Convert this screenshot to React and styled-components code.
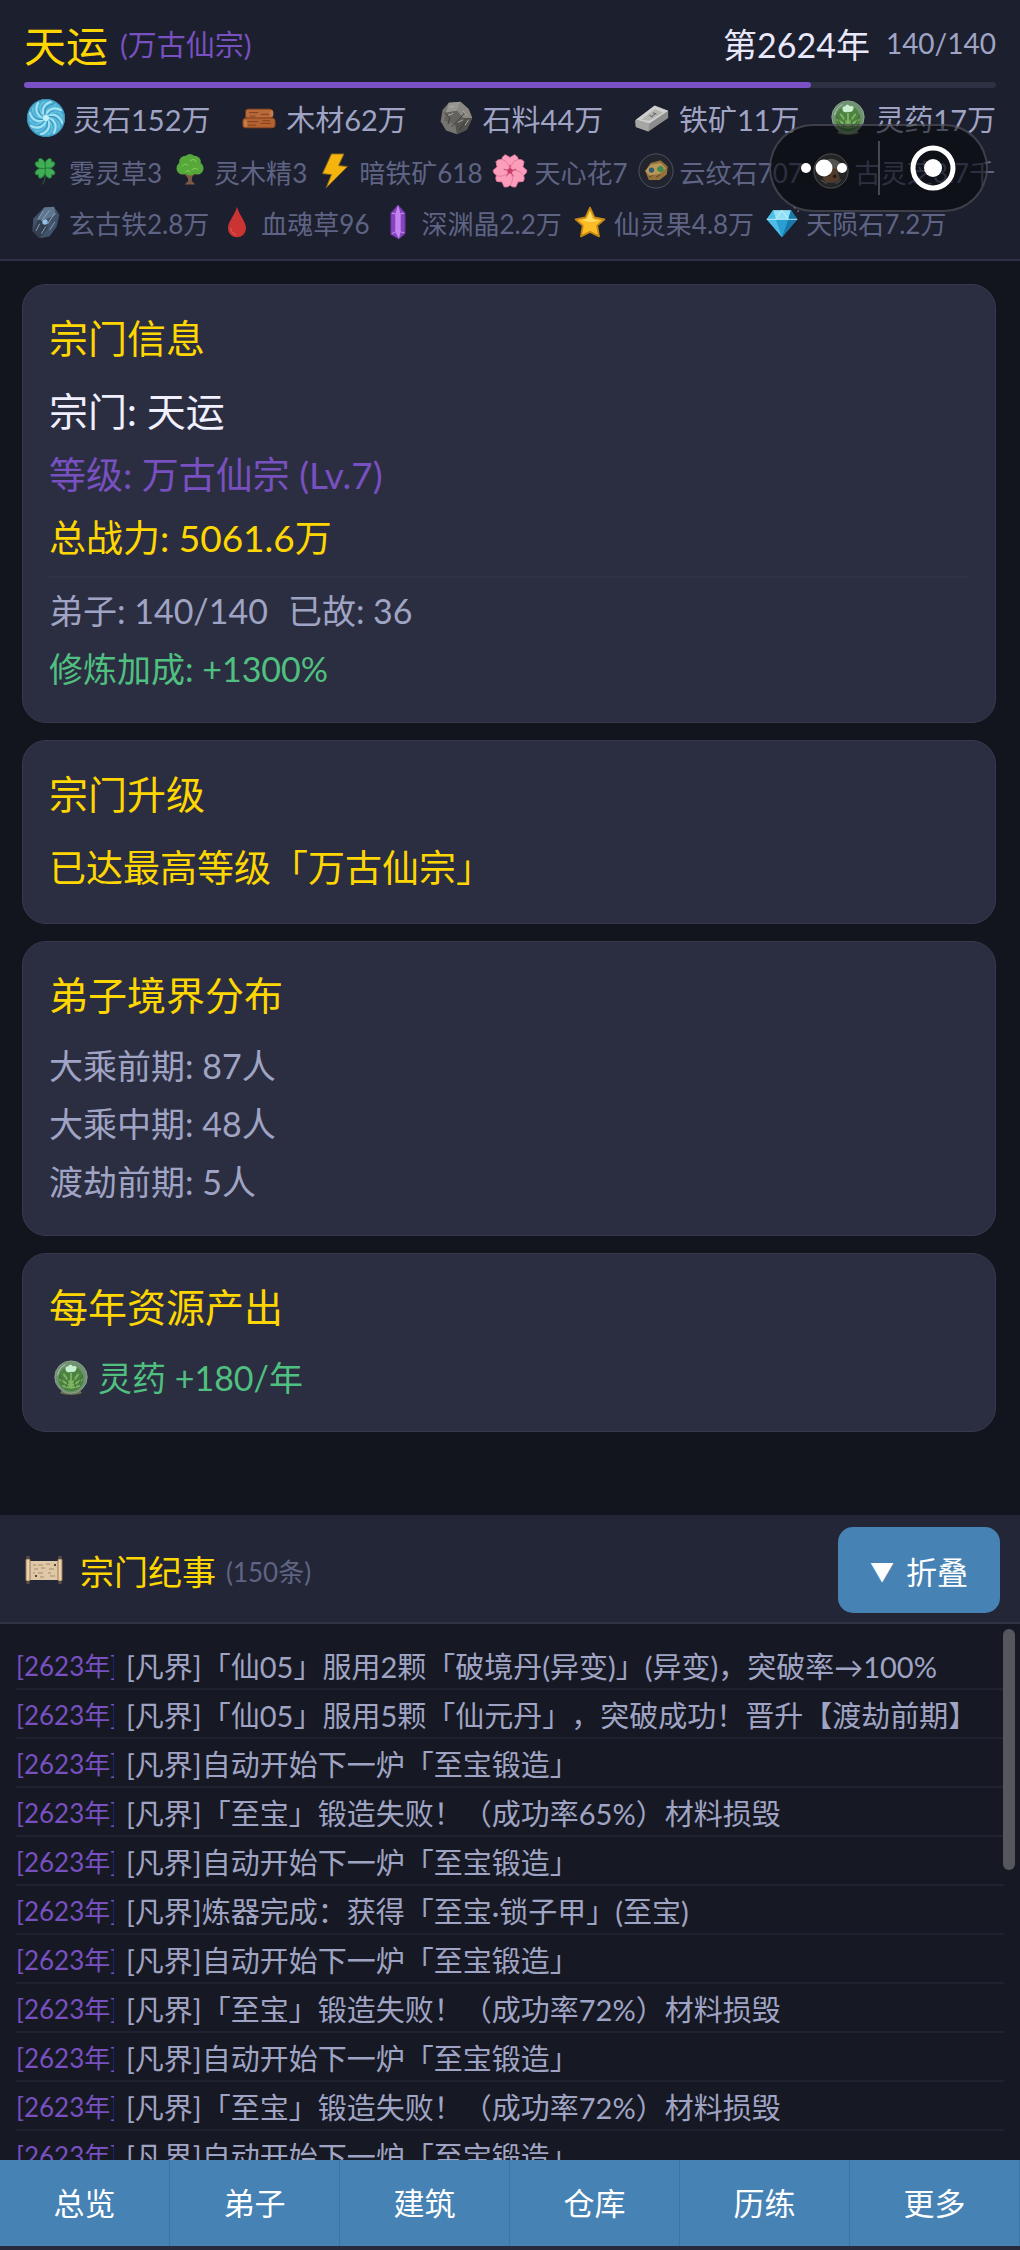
import React, { useState } from "react";
import styled, { createGlobalStyle } from "styled-components";

const resources = [
  { icon: "spirit", name: "灵石", amount: "152万" },
  { icon: "wood", name: "木材", amount: "62万" },
  { icon: "rock", name: "石料", amount: "44万" },
  { icon: "ingot", name: "铁矿", amount: "11万" },
  { icon: "herb", name: "灵药", amount: "17万" },
];

const materials = [
  [
    { icon: "clover", name: "雾灵草", amount: "3" },
    { icon: "tree", name: "灵木精", amount: "3" },
    { icon: "bolt", name: "暗铁矿", amount: "618" },
    { icon: "flower", name: "天心花", amount: "7" },
    { icon: "cloudStone", name: "云纹石", amount: "707" },
    { icon: "fungus", name: "古灵芝", amount: "3.7千" },
  ],
  [
    { icon: "darkIron", name: "玄古铁", amount: "2.8万" },
    { icon: "blood", name: "血魂草", amount: "96" },
    { icon: "crystal", name: "深渊晶", amount: "2.2万" },
    { icon: "star", name: "仙灵果", amount: "4.8万" },
    { icon: "diamond", name: "天陨石", amount: "7.2万" },
  ],
];

const realms = [
  { name: "大乘前期", count: 87 },
  { name: "大乘中期", count: 48 },
  { name: "渡劫前期", count: 5 },
];

const forgeNext = "[凡界]自动开始下一炉「至宝锻造」";
const logs = [
  "[凡界]「仙05」服用2颗「破境丹(异变)」(异变)，突破率→100%",
  "[凡界]「仙05」服用5颗「仙元丹」，突破成功！晋升【渡劫前期】",
  forgeNext,
  "[凡界]「至宝」锻造失败！（成功率65%）材料损毁",
  forgeNext,
  "[凡界]炼器完成：获得「至宝·锁子甲」(至宝)",
  forgeNext,
  "[凡界]「至宝」锻造失败！（成功率72%）材料损毁",
  forgeNext,
  "[凡界]「至宝」锻造失败！（成功率72%）材料损毁",
  forgeNext,
];

const tabs = ["总览", "弟子", "建筑", "仓库", "历练", "更多"];

const swirlArms = [0, 45, 90, 135, 180, 225, 270, 315];

const drawings = {
  spirit: (
    <>
      <circle cx="20" cy="20" r="19" fill="#4fb0d6" />
      <g fill="none" strokeLinecap="round">
        {swirlArms.map((deg) => (
          <g key={deg} transform={`rotate(${deg} 20 20)`}>
            <path d="M20 20C20 12 27 8 35 12" stroke="#a6e4f2" strokeWidth="2" />
            <path d="M20 20C22 13 29 11 36 16" stroke="#2f8fbd" strokeWidth="1" />
            <path d="M20 18C19 10 24 5 30 7" stroke="#74cde8" strokeWidth="1" />
          </g>
        ))}
      </g>
      <circle cx="20" cy="20" r="3" fill="#c4f0fa" />
      <circle cx="20" cy="20" r="18.5" fill="none" stroke="#3c93b8" />
    </>
  ),
  wood: (
    <>
      <rect x="5" y="10" width="30" height="11" rx="3" fill="#b9693a" stroke="#6f3a1e" />
      <rect x="2" y="20" width="36" height="11" rx="3" fill="#b4622f" stroke="#6f3a1e" />
      <path d="M9 14h10M22 16h9M10 18h6M7 24h12M22 26h11M8 28h9M24 23h8" stroke="#7a4020" strokeWidth="1" />
      <ellipse cx="5" cy="26" rx="2" ry="4" fill="#c47c49" />
      <ellipse cx="34" cy="15" rx="2" ry="4" fill="#c47c49" />
    </>
  ),
  rock: (
    <>
      <path d="M12 3L25 2L34 10L38 20L32 33L21 38L9 34L3 24L5 11Z" fill="#77756f" />
      <path d="M12 3L25 2L21 12L9 14Z" fill="#989690" />
      <path d="M25 2L34 10L38 20L28 20L21 12Z" fill="#8b8881" />
      <path d="M9 14L21 12L28 20L19 27L7 23Z" fill="#64625e" />
      <path d="M28 20L38 20L32 33L21 38L19 27Z" fill="#53514e" />
      <path d="M7 14L13 20L11 27M15 30L22 23L30 14M24 33L30 25" stroke="#3b3a38" fill="none" />
      <path d="M13 8l5-1M28 12l4 5M22 25l6-3M11 17l6-2M30 28l4-6" stroke="#b5b2aa" fill="none" />
    </>
  ),
  ingot: (
    <>
      <path d="M1 23L22 7L38 12L38 20L16 35L2 30Z" fill="#8d8d8d" />
      <path d="M2 22L23 6L38 12L17 26Z" fill="#cfcfcd" />
      <path d="M8 22L23 10L32 14L17 23Z" fill="#b4b4b1" />
      <path d="M2 22L17 26L16 35L2 30Z" fill="#a5a5a4" />
      <path d="M17 17l4 2M21 14l4 2M20 18l4-3" stroke="#5b5b5b" strokeWidth="1" />
    </>
  ),
  herb: (
    <>
      <path d="M11 31h18l3 6q-12 4-24 0z" fill="#6d7350" />
      <circle cx="20" cy="19" r="18" fill="#6f9371" stroke="#8fa493" />
      <circle cx="20" cy="21" r="14" fill="#4d8342" />
      <g fill="none" stroke="#7fb465" strokeWidth="2" strokeLinecap="round">
        <path d="M20 31V15M20 27L12 16M20 27L28 16M20 29L8 22M20 29L32 22M20 31L11 29M20 31L29 29" />
      </g>
      <path d="M15 30L17 20M25 30L23 20M11 26L7 17M29 26L33 17" stroke="#356a2f" />
      <path d="M14 11q-1-4 3-4q2-4 5 0q5-1 4 3q-1 4-6 3q-5 2-6-2z" fill="#c9efd2" />
      <path d="M5 17q2-9 9-12" fill="none" stroke="#b6c9b8" />
    </>
  ),
  clover: (
    <>
      <path d="M20 20q1 10-3 15" fill="none" stroke="#2f6b34" strokeWidth="1" />
      {[0, 90, 180, 270].map((deg) => (
        <path key={deg} transform={`rotate(${deg + 45} 20 17)`} d="M20 17C13 13 14 4 18 5Q20 6 20 7Q20 6 22 5C26 4 27 13 20 17Z" fill="#3fae55" stroke="#24783a" />
      ))}
    </>
  ),
  tree: (
    <>
      <path d="M17 20L18 31L14 35H26L22 31L23 20Z" fill="#7b5946" />
      <path d="M20 29L14 22M20 27L27 21" stroke="#7b5946" strokeWidth="2" />
      <g fill="#57a83a">
        <circle cx="12" cy="17" r="7" />
        <circle cx="28" cy="17" r="7" />
        <circle cx="20" cy="19" r="6" />
        <circle cx="15" cy="10" r="7" />
        <circle cx="25" cy="10" r="7" />
        <circle cx="20" cy="7" r="6" />
      </g>
      <path d="M11 15q4-5 7-1M20 9q5-4 7 1M22 19q4-4 7 0M15 21q3-3 5 0" fill="none" stroke="#8bd25a" />
    </>
  ),
  bolt: <path d="M16 1L30 1L24 14L34 15L10 39L16 24L6 23Z" fill="#f6b40e" stroke="#7e6120" />,
  flower: (
    <>
      {[0, 72, 144, 216, 288].map((deg) => (
        <path key={deg} transform={`rotate(${deg} 20 20)`} d="M20 20C8 15 9 4 15 2L20 5L25 2C31 4 32 15 20 20Z" fill="#fb9dbb" stroke="#e3799d" />
      ))}
      <circle cx="20" cy="20" r="3" fill="#d2436f" />
      <path d="M20 20v-7M20 20l7-2M20 20l4 6M20 20l-4 6M20 20l-7-2" stroke="#c23b64" strokeWidth="1" />
    </>
  ),
  cloudStone: (
    <>
      <circle cx="20" cy="20" r="19" fill="#22252d" stroke="#555966" />
      <path d="M8 20L14 11L25 8L33 15L32 24L24 30L12 30Z" fill="#94713d" />
      <path d="M8 20L14 13L25 11L31 17L24 23L13 25Z" fill="#b9985a" />
      <circle cx="15" cy="19" r="3" fill="#335a70" />
      <path d="M21 17q4-5 7-1q2 5-3 5q-4 0-4-4z" fill="#3f8c4b" />
      <path d="M12 27l4-2M20 27l5-3" stroke="#5a421f" />
    </>
  ),
  fungus: (
    <>
      <circle cx="20" cy="20" r="19" fill="#4a4a4b" stroke="#b5b5b5" />
      <path d="M7 14q13-15 26 0l-5 4H12z" fill="#b4b2ad" />
      <path d="M11 29L14 18L20 15L27 18L30 29L24 33H15Z" fill="#b07c55" />
      <circle cx="17" cy="24" r="2" fill="#533420" />
      <circle cx="24" cy="26" r="2" fill="#533420" />
      <path d="M9 30l6 4M31 30l-6 4" stroke="#d0d0d0" />
    </>
  ),
  darkIron: (
    <>
      <path d="M19 4L30 3L36 12L33 25L25 36L14 38L6 30L7 16Z" fill="#40536a" />
      <path d="M19 4L30 3L32 12L21 17L12 18Z" fill="#60768e" />
      <path d="M12 18L21 17L23 27L14 38L6 30Z" fill="#333f50" />
      <path d="M18 8l-6 9M25 7l-9 12M31 10l-8 12M31 20l-6 9M14 22l-4 8M21 25l-5 8" stroke="#93a9be" />
      <circle cx="20" cy="20" r="3" fill="#93c0ea" />
    </>
  ),
  blood: (
    <>
      <path d="M20 3C23 14 30 19 30 27A10 10 0 0 1 10 27C10 19 17 14 20 3Z" fill="#cc3333" />
      <path d="M13 27q1 6 6 7" fill="none" stroke="#e06464" />
    </>
  ),
  crystal: (
    <>
      <path d="M20 1L28 10V33L21 39L12 34V10Z" fill="#8743c0" stroke="#52307f" />
      <path d="M20 1L23 11V31L21 39L17 31V11Z" fill="#c285f2" />
      <path d="M13 10L17 11M23 11L27 10M17 31L13 33M23 31L27 32" fill="none" stroke="#d3a0f5" />
    </>
  ),
  star: (
    <>
      <path d="M20 4L25 15L36 17L28 24L30 36L20 31L10 36L12 24L4 17L15 15Z" fill="#fbbd26" stroke="#c48617" strokeWidth="2" strokeLinejoin="round" />
      <path d="M20 8L23 17L31 19L20 20L11 18L17 16Z" fill="#ffdc64" />
    </>
  ),
  diamond: (
    <>
      <path d="M10 7H30L37 17L20 37L3 17Z" fill="#2b9fd2" />
      <path d="M10 7H30L27 17H13Z" fill="#93e0f5" />
      <path d="M3 17L10 7L13 17L20 37Z" fill="#4cbde6" />
      <path d="M30 7L37 17L20 37L27 17Z" fill="#187aaa" />
      <path d="M3 17H37M13 17L20 7L27 17" fill="none" stroke="#c9f4ff" />
      <circle cx="34" cy="4" r="1" fill="#c49a8b" />
      <circle cx="38" cy="8" r="1" fill="#7c6a85" />
    </>
  ),
  scroll: (
    <>
      <rect x="4" y="11" width="32" height="19" fill="#dfc8a5" />
      <path d="M9 15h3M14 15h5M22 14h4M10 19h4M17 18h4M25 19h5M9 23h2M14 23h5M24 23h3M16 27h4M26 26h5" stroke="#a3886a" />
      <path d="M30 14h2v2h-2zM11 25h2v2h-2z" fill="#5d4330" />
      <rect x="2" y="9" width="4" height="22" rx="1" fill="#ead2ac" stroke="#9b7b58" />
      <rect x="34" y="9" width="4" height="22" rx="1" fill="#ead2ac" stroke="#9b7b58" />
      <path d="M4 9V6M4 31v3M36 9V6M36 31v3" stroke="#5d4d43" strokeWidth="3" />
    </>
  ),
};

const Icon = ({ name, size }) => (
  <Drawing viewBox="0 0 40 40" $size={size} aria-hidden="true">
    {drawings[name]}
  </Drawing>
);

const App = () => {
  const [open, setOpen] = useState(true);

  return (
    <Page>
      <GlobalStyle />
      <Header>
        <TitleRow>
          <SectName>天运</SectName>
          <SectRank>(万古仙宗)</SectRank>
          <Year>第2624年</Year>
          <Population>140/140</Population>
        </TitleRow>
        <Progress>
          <ProgressFill style={{ width: "81%" }} />
        </Progress>
        <ResourceRow>
          {resources.map((item) => (
            <Resource key={item.name}>
              <IconBox>
                <Icon name={item.icon} size={item.icon === "spirit" ? 40 : 36} />
              </IconBox>
              {item.name}
              {item.amount}
            </Resource>
          ))}
        </ResourceRow>
        {materials.map((row, i) => (
          <MaterialRow key={i}>
            {row.map((item) => (
              <Material key={item.name}>
                <Icon name={item.icon} size={36} />
                {item.name}
                {item.amount}
              </Material>
            ))}
          </MaterialRow>
        ))}
        <Capsule>
          <CapsuleButton aria-label="更多操作">
            <svg width="48" height="48" viewBox="0 0 48 48" fill="#fff">
              <circle cx="6" cy="24" r="5" />
              <circle cx="24" cy="24" r="8.5" />
              <circle cx="42" cy="24" r="5" />
            </svg>
          </CapsuleButton>
          <CapsuleDivider />
          <CapsuleButton aria-label="关闭">
            <svg width="48" height="48" viewBox="0 0 48 48">
              <circle cx="24" cy="24" r="20" fill="none" stroke="#fff" strokeWidth="5" />
              <circle cx="24" cy="24" r="9" fill="#fff" />
            </svg>
          </CapsuleButton>
        </Capsule>
      </Header>

      <Main>
        <Card>
          <CardTitle>宗门信息</CardTitle>
          <BigLine $color="#f0f0ff" $size={39}>宗门: 天运</BigLine>
          <BigLine $color="#7850c0">等级: 万古仙宗 (Lv.7)</BigLine>
          <BigLine $color="#ffd700">总战力: 5061.6万</BigLine>
          <Divider />
          <Line>
            <span>弟子: 140/140</span>
            <span>已故: 36</span>
          </Line>
          <Line $color="#50c080">修炼加成: +1300%</Line>
        </Card>
        <Card>
          <CardTitle>宗门升级</CardTitle>
          <BigLine $color="#ffd700">已达最高等级「万古仙宗」</BigLine>
        </Card>
        <Card>
          <CardTitle>弟子境界分布</CardTitle>
          {realms.map((realm) => (
            <Line key={realm.name}>
              {realm.name}: {realm.count}人
            </Line>
          ))}
        </Card>
        <Card>
          <CardTitle>每年资源产出</CardTitle>
          <Line $color="#50c080">
            <Output>
              <IconBox>
                <Icon name="herb" size={36} />
              </IconBox>
              灵药 +180/年
            </Output>
          </Line>
        </Card>
      </Main>

      <LogPanel $open={open}>
        <LogHeader>
          <Icon name="scroll" size={40} />
          <LogTitle>宗门纪事</LogTitle>
          <LogCount>(150条)</LogCount>
          <FoldButton onClick={() => setOpen(!open)}>
            <Caret>{open ? "▼" : "▲"}</Caret>
            {open ? "折叠" : "展开"}
          </FoldButton>
        </LogHeader>
        {open && (
          <LogBody>
            <LogList>
              {logs.map((text, i) => (
                <LogItem key={i}>
                  <LogYear>[2623年]</LogYear>
                  <LogText>{text}</LogText>
                </LogItem>
              ))}
            </LogList>
            <ScrollThumb />
          </LogBody>
        )}
      </LogPanel>

      <TabBar>
        {tabs.map((tab) => (
          <Tab key={tab}>{tab}</Tab>
        ))}
      </TabBar>
    </Page>
  );
};

const GlobalStyle = createGlobalStyle`
  * {
    box-sizing: border-box;
  }
  body {
    margin: 0;
    background: #12151d;
    font-family: Lato, "Noto Sans CJK SC", sans-serif;
    text-spacing-trim: space-all;
  }
  button {
    font-family: inherit;
    cursor: pointer;
  }
`;

const Page = styled.div`
  display: flex;
  flex-direction: column;
  height: 100vh;
  overflow: hidden;
  white-space: nowrap;
  color: #a0a4c4;
`;

const Drawing = styled.svg`
  flex: none;
  width: ${(props) => props.$size}px;
  height: ${(props) => props.$size}px;
`;

const Header = styled.header`
  position: relative;
  flex: none;
  padding: 14px 24px 17px;
  background: #1c1f2e;
  border-bottom: 2px solid #2e3144;
`;

const TitleRow = styled.div`
  display: flex;
  align-items: center;
  height: 58px;
`;

const SectName = styled.h1`
  margin: 0 12px 0 0;
  font-size: 42px;
  font-weight: 400;
  color: #ffd700;
`;

const SectRank = styled.span`
  font-size: 29px;
  color: #7850c0;
`;

const Year = styled.span`
  margin-left: auto;
  font-size: 34px;
  color: #e8e8fa;
`;

const Population = styled.span`
  margin-left: 16px;
  font-size: 28px;
`;

const Progress = styled.div`
  height: 6px;
  margin-top: 10px;
  border-radius: 3px;
  background: #2e3144;
`;

const ProgressFill = styled.div`
  height: 100%;
  border-radius: 3px;
  background: #7b52c6;
`;

const ResourceRow = styled.div`
  display: flex;
  justify-content: space-between;
  margin-top: 8px;
`;

const Resource = styled.div`
  display: flex;
  align-items: center;
  gap: 5px;
  height: 44px;
  font-size: 29px;
`;

const IconBox = styled.span`
  display: flex;
  flex: none;
  justify-content: center;
  width: 44px;
`;

const MaterialRow = styled.div`
  display: flex;
  gap: 7px;
  margin-top: 11px;
`;

const Material = styled.div`
  display: flex;
  align-items: center;
  gap: 6px;
  height: 40px;
  padding-left: 3px;
  font-size: 26px;
  color: #5f6484;
`;

const Capsule = styled.div`
  position: absolute;
  top: 124px;
  right: 32px;
  display: flex;
  align-items: center;
  width: 219px;
  height: 88px;
  border: 2px solid rgba(120, 122, 130, 0.45);
  border-radius: 44px;
  background: rgba(4, 6, 8, 0.55);
`;

const CapsuleButton = styled.button`
  display: flex;
  flex: 1;
  align-items: center;
  justify-content: center;
  height: 100%;
  padding: 0;
  border: none;
  background: none;
`;

const CapsuleDivider = styled.span`
  width: 2px;
  height: 54px;
  background: #454850;
`;

const Main = styled.main`
  display: flex;
  flex: 21 1 0;
  flex-direction: column;
  gap: 17px;
  min-height: 0;
  padding: 23px 24px 0 22px;
  overflow: hidden;
`;

const Card = styled.section`
  flex: none;
  padding: 23px 26px 24px;
  border: 1px solid #363a4e;
  border-radius: 24px;
  background: #2b2e41;
`;

const CardTitle = styled.h2`
  margin: 0 0 12px;
  font-size: 39px;
  font-weight: 400;
  line-height: 60px;
  color: #ffd700;
`;

const BigLine = styled.div`
  font-size: ${(props) => props.$size || 37}px;
  line-height: 63px;
  color: ${(props) => props.$color};
`;

const Line = styled.div`
  display: flex;
  gap: 20px;
  font-size: 34px;
  line-height: 58px;
  color: ${(props) => props.$color || "#a0a4c4"};
`;

const Output = styled.span`
  display: flex;
  align-items: center;
  gap: 5px;
`;

const Divider = styled.hr`
  height: 2px;
  margin: 7px 0 4px;
  border: none;
  background: #303346;
`;

const LogPanel = styled.section`
  display: flex;
  flex: ${(props) => (props.$open ? "11 1 0" : "none")};
  flex-direction: column;
  min-height: 0;
  background: #161923;
`;

const LogHeader = styled.div`
  display: flex;
  flex: none;
  align-items: center;
  padding: 12px 20px 9px 24px;
  border-bottom: 2px solid #303346;
  background: #232636;
`;

const LogTitle = styled.h2`
  margin: 0 10px 0 16px;
  font-size: 34px;
  font-weight: 400;
  color: #ffd700;
`;

const LogCount = styled.span`
  font-size: 26px;
  color: #5f6484;
`;

const FoldButton = styled.button`
  display: flex;
  align-items: center;
  gap: 12px;
  height: 86px;
  margin-left: auto;
  padding: 0 32px;
  border: none;
  border-radius: 15px;
  font-size: 31px;
  color: #fff;
  background: #4682b4;
`;

const Caret = styled.span`
  font-size: 24px;
`;

const LogBody = styled.div`
  position: relative;
  flex: 1;
  min-height: 0;
`;

const LogList = styled.ul`
  height: 100%;
  margin: 0;
  padding: 17px 16px 0;
  list-style: none;
  overflow: hidden;
`;

const LogItem = styled.li`
  display: flex;
  align-items: center;
  gap: 12px;
  height: 49px;
  border-bottom: 2px solid #20232f;
`;

const LogYear = styled.span`
  flex: none;
  width: 98px;
  overflow: hidden;
  font-size: 26px;
  color: #7850c0;
`;

const LogText = styled.span`
  font-size: 29px;
`;

const ScrollThumb = styled.div`
  position: absolute;
  top: 5px;
  right: 5px;
  width: 12px;
  height: 45%;
  border-radius: 6px;
  background: #55575c;
`;

const TabBar = styled.nav`
  display: grid;
  flex: none;
  grid-template-columns: repeat(6, 1fr);
  border-bottom: 4px solid #262a3b;
`;

const Tab = styled.button`
  height: 86px;
  padding: 0 0 4px;
  border: none;
  border-right: 1px solid #3c75a4;
  font-size: 31px;
  color: #fff;
  background: #4682b4;
`;

export default App;
